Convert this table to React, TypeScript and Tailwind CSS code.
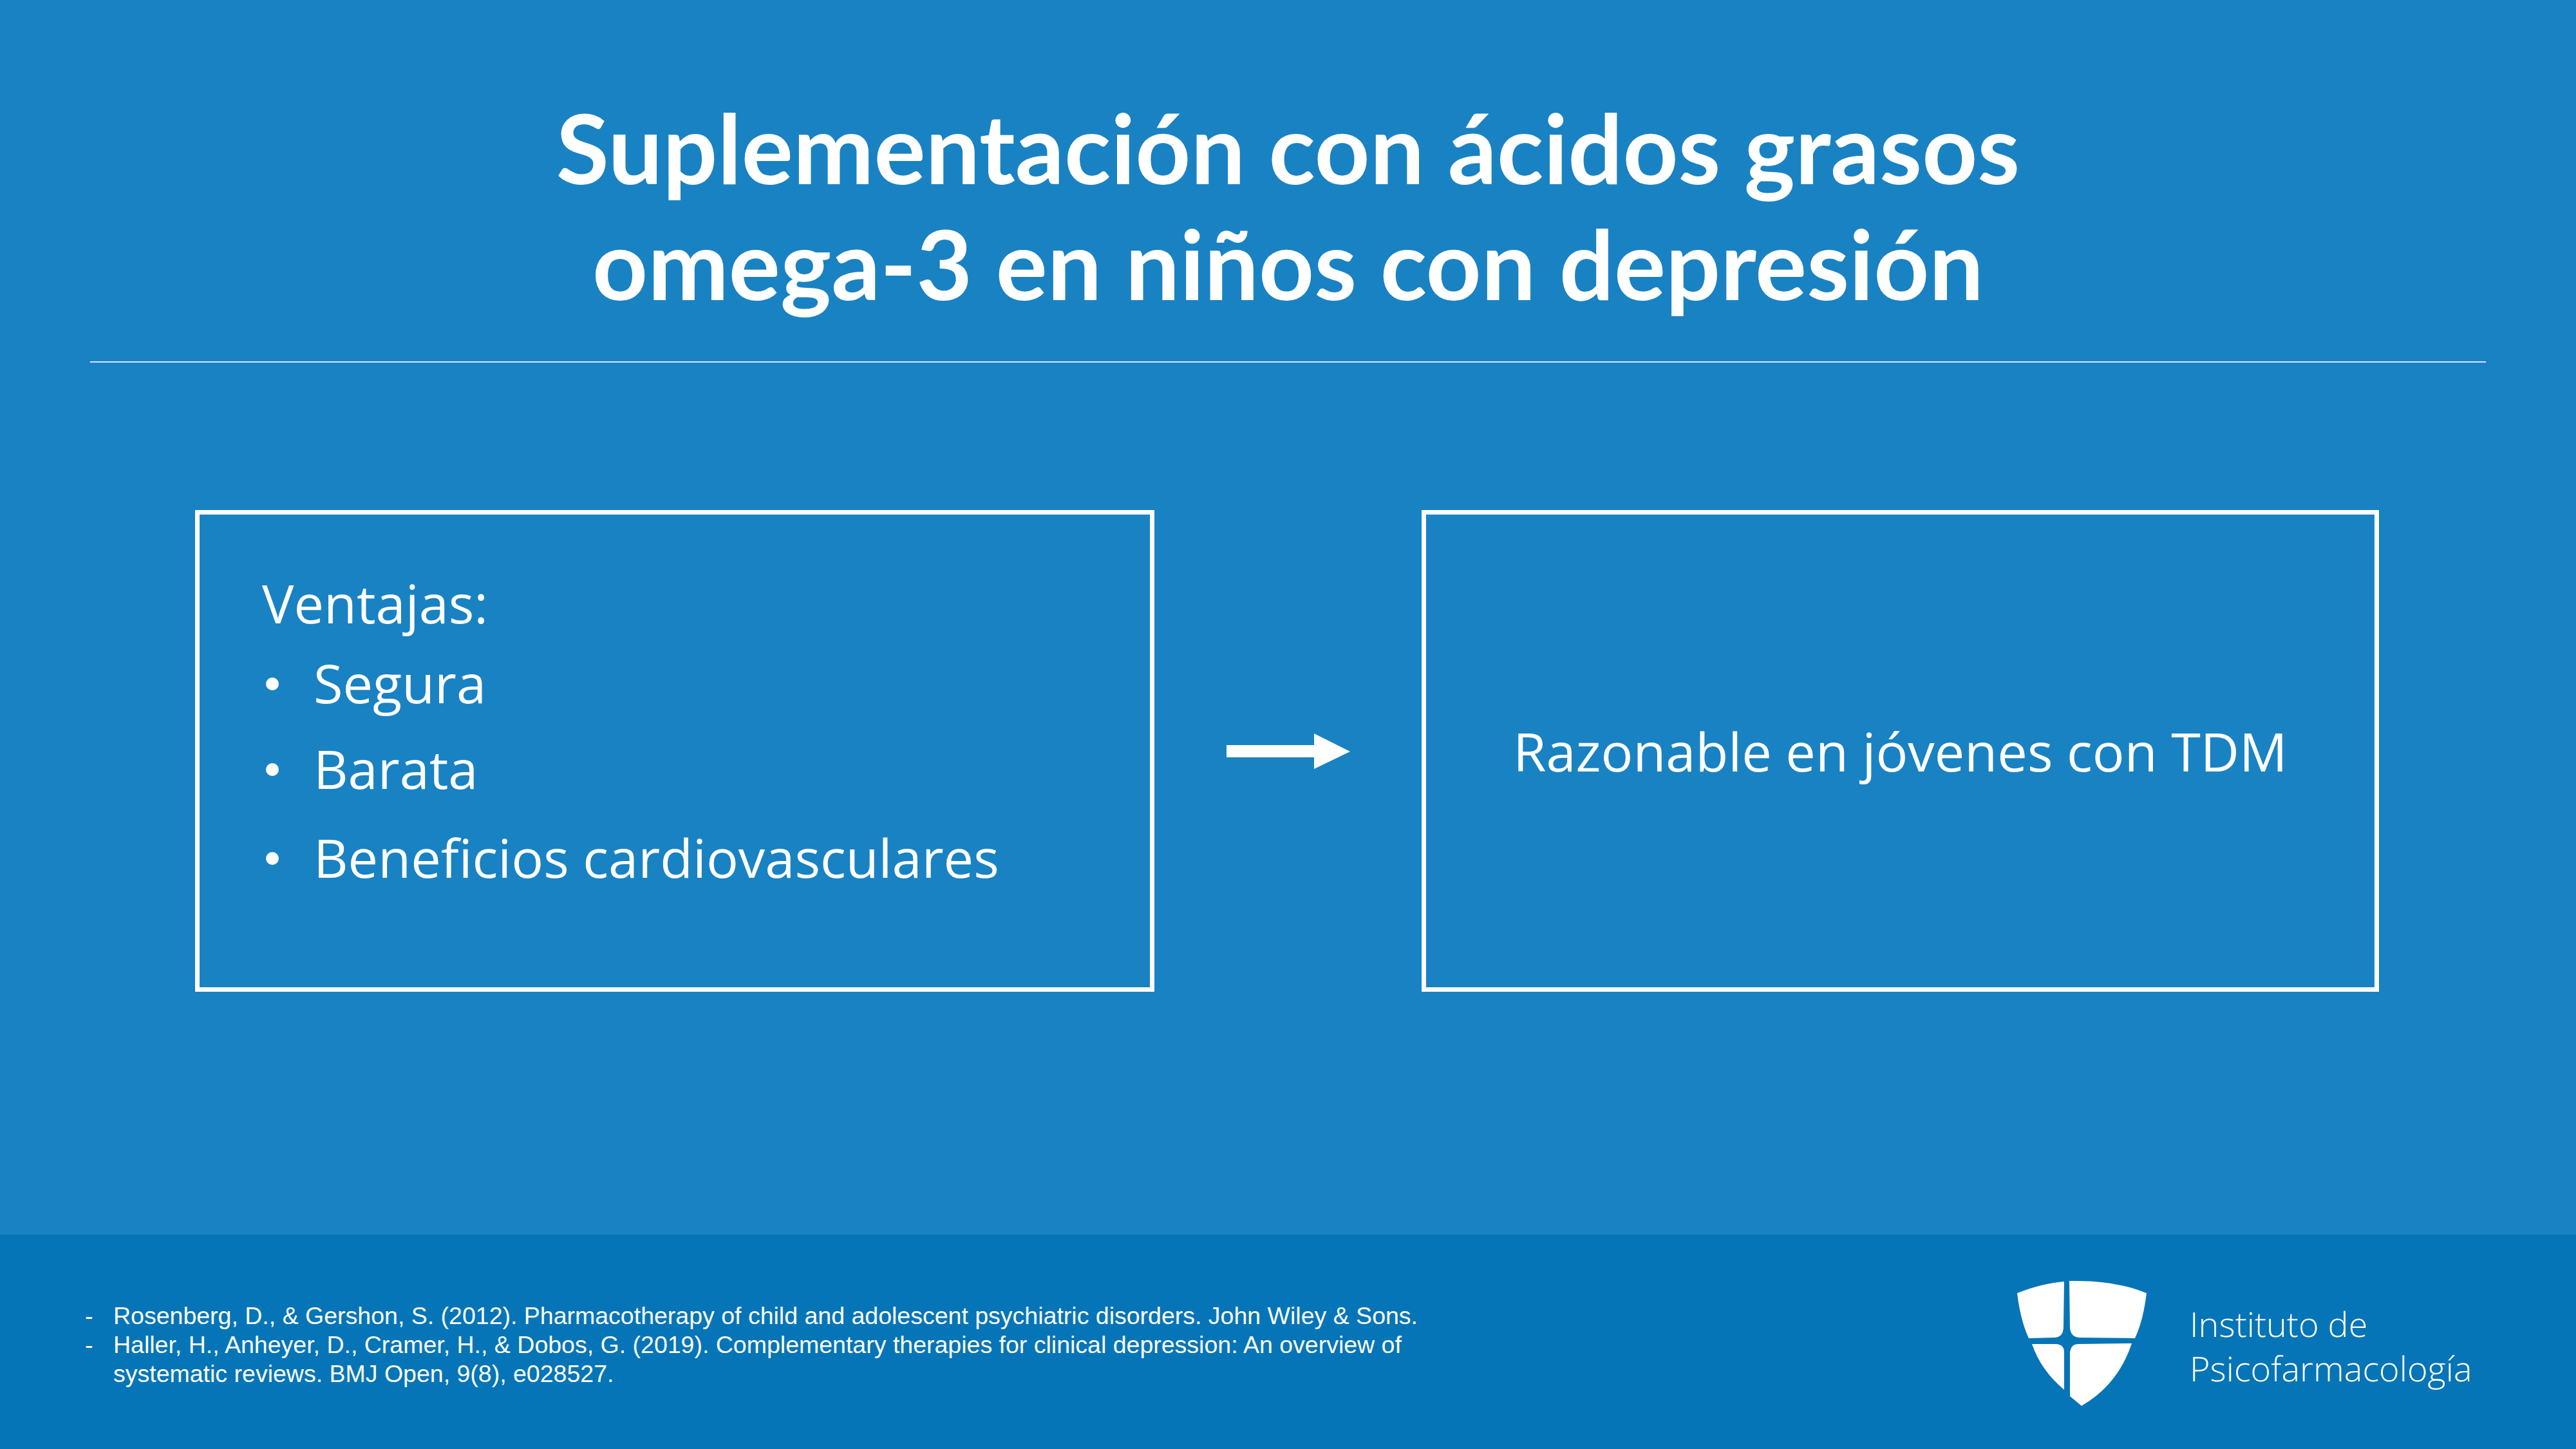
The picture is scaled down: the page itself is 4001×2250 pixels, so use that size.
import React from "react";

function Shield() {
  return (
    <svg width="210" height="202" viewBox="30 25 210 202" className="shrink-0 mt-[68px]">
      <g fill="#ffffff">
        <path d="M33,48 C58,38 82,32 106,30 L105,100 Q105,117 90,117 L51,118 Q38,90 33,48 Z" />
        <path d="M114,29 C160,28 200,34 234,48 Q229,90 216,118 L130,117 Q116,116 115,102 Z" />
        <path d="M56,127 L94,127 Q106,128 106,140 L106,198 Q70,168 56,127 Z" />
        <path d="M128,127 L211,126 Q190,190 133,223 L115,208 L115,141 Q116,127 128,127 Z" />
      </g>
    </svg>
  );
}

export default function App() {
  const sans = { fontFamily: '"Open Sans", "Noto Sans", sans-serif' };
  return (
    <div className="w-[4001px] h-[2250px] flex flex-col bg-[#1982c3] text-white overflow-hidden">
      {/* Title */}
      <div
        className="pt-[138px] text-center text-[150px] leading-[180px] font-bold"
        style={{ fontFamily: 'Lato, "Open Sans", sans-serif' }}
      >
        <div>Suplementación con ácidos grasos</div>
        <div>omega-3 en niños con depresión</div>
      </div>

      {/* Divider */}
      <div className="mt-[63px] mx-[140px] h-[2px] bg-[#d6e8f4]" />

      {/* Main content */}
      <div className="mt-[229px] pl-[303px] flex items-center" style={sans}>
        <div className="w-[1490px] h-[748px] border-[7px] border-white pl-[97px] pt-[87px] text-[83px] leading-[100px]">
          <div>Ventajas:</div>
          {[
            ["Segura", "mt-[24px]"],
            ["Barata", "mt-[33px]"],
            ["Beneficios cardiovasculares", "mt-[38px]"],
          ].map(([t, m]) => (
            <div key={t} className={`flex items-center ${m}`}>
              <span className="ml-[6px] mt-[4px] w-[20px] h-[20px] rounded-full bg-white shrink-0" />
              <span className="ml-[54px]">{t}</span>
            </div>
          ))}
        </div>

        <div className="w-[415px] flex justify-center">
          <svg width="192" height="55" viewBox="0 0 192 55">
            <rect x="0" y="18" width="137" height="19" fill="#ffffff" />
            <polygon points="136,0 192,28 136,55" fill="#ffffff" />
          </svg>
        </div>

        <div className="w-[1487px] h-[748px] border-[7px] border-white flex items-center justify-center text-[83px] leading-[100px]">
          Razonable en jóvenes con TDM
        </div>
      </div>

      {/* Footer */}
      <div className="mt-auto h-[333px] bg-[#0675b7] flex pl-[132px]">
        <div
          className="w-[2998px] shrink-0 pt-[104px] text-[37.5px] leading-[45px]"
          style={{ fontFamily: '"Liberation Sans", Arial, sans-serif' }}
        >
          <div className="flex">
            <span className="w-[44px] shrink-0">-</span>
            <span>Rosenberg, D., &amp; Gershon, S. (2012). Pharmacotherapy of child and adolescent psychiatric disorders. John Wiley &amp; Sons.</span>
          </div>
          <div className="flex">
            <span className="w-[44px] shrink-0">-</span>
            <span>
              Haller, H., Anheyer, D., Cramer, H., &amp; Dobos, G. (2019). Complementary therapies for clinical depression: An overview of
              <br />
              systematic reviews. BMJ Open, 9(8), e028527.
            </span>
          </div>
        </div>
        <Shield />
        <div className="ml-[61px] pt-[104px] text-[54px] leading-[69px] font-light" style={sans}>
          <div>Instituto de</div>
          <div>Psicofarmacología</div>
        </div>
      </div>
    </div>
  );
}
